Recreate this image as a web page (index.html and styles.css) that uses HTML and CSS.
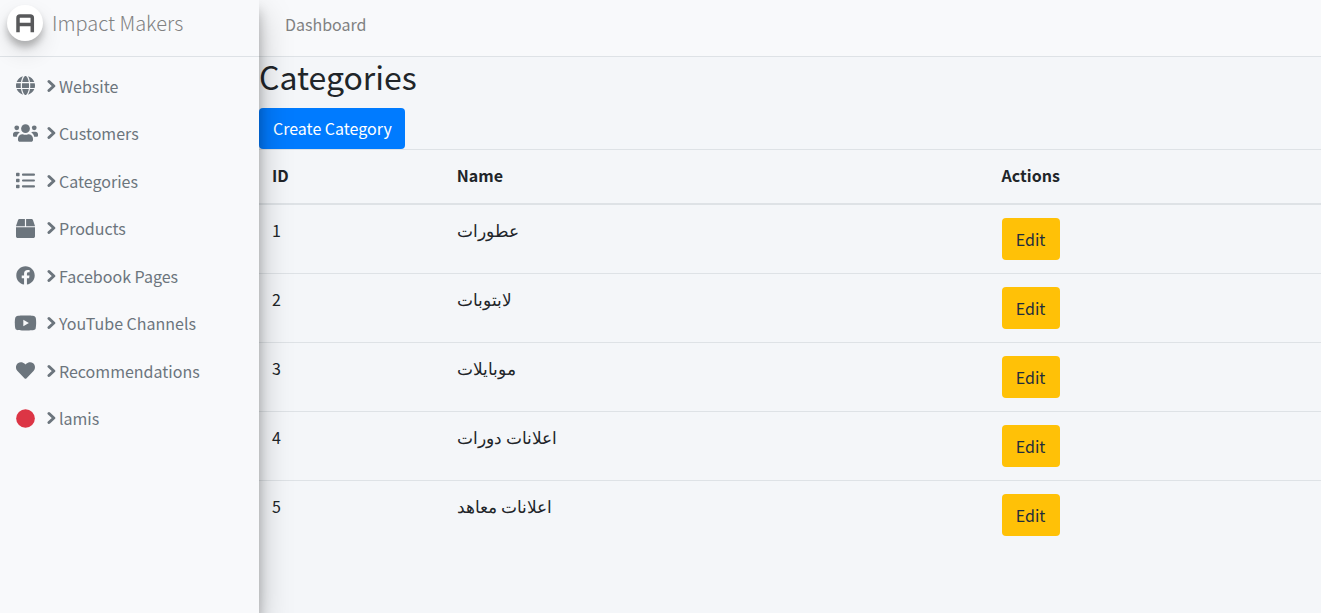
FILE: index.html
```html
<!DOCTYPE html>
<html lang="en">
<head>
<meta charset="utf-8">
<title>Categories</title>
<link rel="stylesheet" href="styles.css">
</head>
<body>
<div class="wrapper">
  <aside class="sidebar">
    <a class="brand" href="#">
      <span class="brand-logo">
        <svg viewBox="0 0 36 36" width="36" height="36" aria-hidden="true"><path d="M11 27.300V13Q11 11 13 11H23.300Q25.300 11 25.300 13V27.300M11 19.600H25.300" fill="none" stroke="#58595b" stroke-width="3.500"/></svg>
      </span>
      <span class="brand-text">Impact Makers</span>
    </a>
    <nav class="menu">
      <a class="menu-link" href="#"><svg class="icon" viewBox="0 0 512 512"><path d="M352 256c0 22.200-1.200 43.600-3.300 64H163.300c-2.200-20.400-3.300-41.800-3.300-64s1.200-43.600 3.300-64h185.400c2.200 20.400 3.300 41.800 3.300 64zm28.800-64h123.100c5.300 20.500 8.100 41.900 8.100 64s-2.800 43.500-8.100 64H380.800c2.100-20.600 3.200-42 3.200-64s-1.100-43.400-3.200-64zm112.600-32H376.700c-10-63.900-29.800-117.400-55.300-151.600 78.300 20.700 142 77.500 172 151.600zm-149.100 0H167.700c6.100-36.400 15.500-68.600 27-94.700 10.500-23.600 22.200-40.700 33.500-51.500C239.400 3.200 248.700 0 256 0s16.600 3.200 27.800 13.800c11.300 10.800 23 27.900 33.500 51.500 11.600 26 20.900 58.200 27 94.700zm-209 0H18.600c30-74.100 93.700-130.900 172-151.600-25.500 34.200-45.300 87.700-55.300 151.600zM8.100 192h123.100c-2.100 20.600-3.200 42-3.200 64s1.100 43.400 3.200 64H8.100C2.800 299.500 0 278.100 0 256s2.800-43.500 8.100-64zm186.600 254.600c-11.600-26-20.900-58.200-27-94.600h176.600c-6.100 36.400-15.500 68.600-27 94.600-10.500 23.600-22.200 40.700-33.500 51.500C272.600 508.800 263.300 512 256 512s-16.600-3.200-27.800-13.800c-11.300-10.800-23-27.900-33.500-51.600zM135.300 352c10 63.900 29.800 117.400 55.300 151.600-78.300-20.700-142-77.500-172-151.600h116.700zm358.100 0c-30 74.100-93.700 130.900-172 151.600 25.500-34.200 45.300-87.700 55.300-151.600h116.700z"/></svg><svg class="chevron" viewBox="0 0 10 14"><path d="M2 2.500 6.800 7 2 11.500"/></svg>Website</a>
      <a class="menu-link" href="#"><svg class="icon icon-wide" viewBox="0 0 640 512"><circle cx="96" cy="124" r="61"/><circle cx="544" cy="124" r="61"/><circle cx="320" cy="144" r="112"/><path d="M64 224h64c18 0 34 7 45 19-40 22-69 61-75 109H32c-18 0-32-14-32-32v-32c0-35 29-64 64-64zM576 224h-64c-18 0-34 7-45 19 40 22 69 61 75 109h66c18 0 32-14 32-32v-32c0-35-29-64-64-64zM243 288h8c43 21 95 21 138 0h8c64 0 115 51 115 115v29c0 27-21 48-48 48H176c-27 0-48-21-48-48v-29c0-64 51-115 115-115z"/></svg><svg class="chevron" viewBox="0 0 10 14"><path d="M2 2.500 6.800 7 2 11.500"/></svg>Customers</a>
      <a class="menu-link" href="#"><svg class="icon" viewBox="0 0 512 512"><rect x="0" y="48" width="96" height="96" rx="20"/><rect x="0" y="208" width="96" height="96" rx="20"/><rect x="0" y="368" width="96" height="96" rx="20"/><rect x="160" y="66" width="352" height="60" rx="28"/><rect x="160" y="226" width="352" height="60" rx="28"/><rect x="160" y="386" width="352" height="60" rx="28"/></svg><svg class="chevron" viewBox="0 0 10 14"><path d="M2 2.500 6.800 7 2 11.500"/></svg>Categories</a>
      <a class="menu-link" href="#"><svg class="icon" viewBox="0 0 512 512"><path d="M509.500 184.600 458.900 32.800C452.400 13.200 434.100 0 413.400 0H272v192h238.700c-.4-2.500-.4-5-1.200-7.400zM240 0H98.600c-20.700 0-39 13.200-45.500 32.800L2.500 184.600c-.8 2.400-.8 4.900-1.200 7.400H240V0zM0 224v240c0 26.500 21.500 48 48 48h416c26.500 0 48-21.500 48-48V224H0z"/></svg><svg class="chevron" viewBox="0 0 10 14"><path d="M2 2.500 6.800 7 2 11.500"/></svg>Products</a>
      <a class="menu-link" href="#"><svg class="icon" viewBox="0 0 512 512"><path d="M504 256C504 119 393 8 256 8S8 119 8 256c0 123.780 90.690 226.380 209.250 245V327.690h-63V256h63v-54.640c0-62.150 37-96.480 93.670-96.480 27.140 0 55.520 4.840 55.520 4.840v61h-31.280c-30.800 0-40.410 19.120-40.410 38.730V256h68.780l-11 71.690h-57.780V501C413.310 482.380 504 379.780 504 256z"/></svg><svg class="chevron" viewBox="0 0 10 14"><path d="M2 2.500 6.800 7 2 11.500"/></svg>Facebook Pages</a>
      <a class="menu-link" href="#"><svg class="icon icon-wide" viewBox="0 0 576 512"><path d="M549.655 124.083c-6.281-23.650-24.787-42.276-48.284-48.597C458.781 64 288 64 288 64S117.220 64 74.629 75.486c-23.497 6.322-42.003 24.947-48.284 48.597-11.412 42.867-11.412 132.305-11.412 132.305s0 89.438 11.412 132.305c6.281 23.650 24.787 41.500 48.284 47.821C117.220 448 288 448 288 448s170.780 0 213.371-11.486c23.497-6.321 42.003-24.171 48.284-47.821 11.412-42.867 11.412-132.305 11.412-132.305s0-89.438-11.412-132.305zm-317.510 213.508V175.185l142.739 81.205-142.739 81.201z"/></svg><svg class="chevron" viewBox="0 0 10 14"><path d="M2 2.500 6.800 7 2 11.500"/></svg>YouTube Channels</a>
      <a class="menu-link" href="#"><svg class="icon" viewBox="0 0 512 512"><path d="M462.300 62.600C407.500 15.900 326 24.300 275.700 76.200L256 96.500l-19.700-20.300C186.100 24.300 104.500 15.900 49.700 62.600c-62.800 53.600-66.100 149.800-9.900 207.900l193.500 199.800c12.500 12.900 32.800 12.900 45.300 0l193.500-199.800c56.300-58.100 53-154.300-9.800-207.900z"/></svg><svg class="chevron" viewBox="0 0 10 14"><path d="M2 2.500 6.800 7 2 11.500"/></svg>Recommendations</a>
      <a class="menu-link" href="#"><svg class="icon icon-danger" viewBox="0 0 512 512"><circle cx="256" cy="256" r="252"/></svg><svg class="chevron" viewBox="0 0 10 14"><path d="M2 2.500 6.800 7 2 11.500"/></svg>lamis</a>
    </nav>
  </aside>
  <div class="page">
    <header class="topbar"><a class="topbar-link" href="#">Dashboard</a></header>
    <main>
      <h1 class="title">Categories</h1>
      <button class="btn btn-primary" type="button">Create Category</button>
      <table class="table">
        <thead><tr><th class="col-id">ID</th><th class="col-name">Name</th><th>Actions</th></tr></thead>
        <tbody>
          <tr><td>1</td><td class="ar" lang="ar">عطورات</td><td><button class="btn btn-warning" type="button">Edit</button></td></tr>
          <tr><td>2</td><td class="ar" lang="ar">لابتوبات</td><td><button class="btn btn-warning" type="button">Edit</button></td></tr>
          <tr><td>3</td><td class="ar" lang="ar">موبايلات</td><td><button class="btn btn-warning" type="button">Edit</button></td></tr>
          <tr><td>4</td><td class="ar" lang="ar">اعلانات دورات</td><td><button class="btn btn-warning" type="button">Edit</button></td></tr>
          <tr><td>5</td><td class="ar" lang="ar">اعلانات معاهد</td><td><button class="btn btn-warning" type="button">Edit</button></td></tr>
        </tbody>
      </table>
    </main>
  </div>
</div>
</body>
</html>
```
FILE: styles.css
```css
* { box-sizing: border-box; }
body {
  margin: 0;
  font-family: "Noto Sans CJK SC", sans-serif;
  font-size: 16px;
  line-height: 26px;
  color: #212529;
  background: #f4f6f9;
}
a { text-decoration: none; }
.wrapper { display: flex; min-height: 100vh; }
.sidebar {
  flex: 0 0 259px;
  position: relative;
  z-index: 1;
  background: #f8f9fb;
  box-shadow: 0 15px 31px rgba(0, 0, 0, .25), 0 11px 11px rgba(0, 0, 0, .22);
}
.brand {
  display: flex;
  align-items: center;
  gap: 9px;
  height: 57px;
  padding: 0 7px 10px;
  border-bottom: 1px solid #dee2e6;
  color: #808182;
  font-size: 20px;
  font-weight: 300;
}
.brand-logo {
  width: 36px;
  height: 36px;
  border-radius: 50%;
  background: #fff;
  box-shadow: 0 11px 22px rgba(0, 0, 0, .12), 0 6px 7px rgba(0, 0, 0, .23);
}
.brand-logo svg { display: block; }
.menu {
  display: grid;
  grid-auto-rows: 1fr;
  min-height: 380px;
  margin-top: 5px;
}
.menu-link {
  display: flex;
  align-items: center;
  padding: 0 12px;
  color: #6c757d;
}
.icon { width: 27px; height: 19px; fill: currentColor; }
.icon-wide { height: 20px; }
.icon-danger { color: #dc3545; }
.chevron {
  width: 10px;
  height: 14px;
  margin: 0 2px 0 8px;
  fill: none;
  stroke: currentColor;
  stroke-width: 3;
  stroke-linecap: round;
  stroke-linejoin: round;
}
.page { flex: 1; min-width: 0; }
.topbar {
  height: 57px;
  padding: 11px 26px;
  background: #f8f9fb;
  border-bottom: 1px solid #dee2e6;
}
.topbar-link { color: #808182; }
.title {
  margin: 0 0 13px;
  font-size: 32px;
  font-weight: 400;
  line-height: 38px;
}
.btn {
  display: block;
  height: 42px;
  padding: 0 14px;
  border: 0;
  border-radius: 4px;
  font: inherit;
}
.btn-primary { height: 41px; padding: 0 13px 2px 14px; color: #fff; background: #007bff; }
.btn-warning { min-width: 58px; color: #1f2d3d; background: #ffc107; }
.table { width: 100%; table-layout: fixed; border-spacing: 0; }
.table th, .table td {
  padding: 13px;
  text-align: left;
  vertical-align: top;
}
.table th {
  padding: 12px 13px 15px;
  border-top: 1px solid #dee2e6;
  border-bottom: 2px solid #dee2e6;
  font-weight: 700;
}
.table td { padding-top: 12px; }
.table td:last-child { padding-top: 13px; }
.table tr + tr td { border-top: 1px solid #dee2e6; }
.col-id { width: 17.4%; }
.col-name { width: 51.3%; }
.table .ar { font-size: 17px; font-weight: 300; }
```
